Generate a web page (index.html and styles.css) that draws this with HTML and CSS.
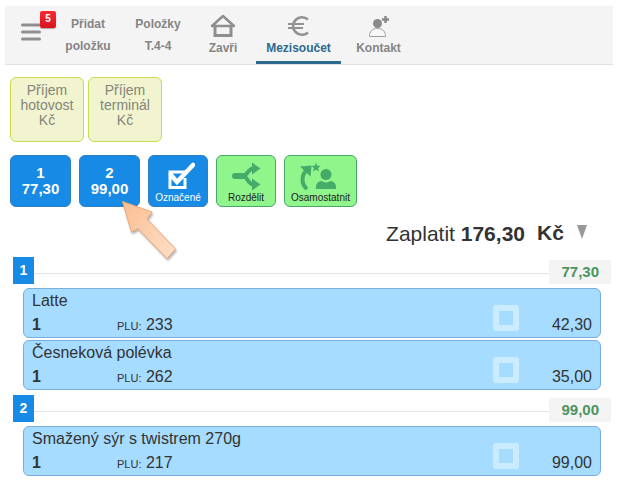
FILE: index.html
```
<!DOCTYPE html>
<html lang="cs">
<head>
    <meta charset="UTF-8">
    <meta name="viewport" content="width=device-width, initial-scale=1.0">
    <title>Mezisoučet</title>
    <link rel="stylesheet" href="styles.css">
</head>
<body>
    <nav class="topbar">
        <button class="menu" type="button" aria-label="Menu">
            <svg width="20" height="18" viewBox="0 0 20 18" fill="none" stroke="#8f8f8f" stroke-width="3" stroke-linecap="round">
                <path d="M1.500 2h17M1.500 9h17M1.500 16h17"/>
            </svg>
            <span class="menu-badge">5</span>
        </button>
        <a class="tab tab-text" href="#">Přidat<br>položku</a>
        <a class="tab tab-text" href="#">Položky<br>T.4-4</a>
        <a class="tab tab-close" href="#">
            <svg width="26" height="24" viewBox="0 0 26 24" fill="none" stroke="#8f8f8f">
                <path d="M2 12L13 2l11 10z" stroke-width="2.500" stroke-linejoin="round"/>
                <path d="M5 12v9.500h16V12" stroke-width="3"/>
            </svg>
            Zavři
        </a>
        <a class="tab tab-active" href="#">
            <svg width="26" height="24" viewBox="0 0 26 24" fill="none" stroke="#929292">
                <path d="M22 5.500A9 8.700 0 1 0 22 18.500" stroke-width="2.600"/>
                <path d="M2 10h16M2 14h15" stroke-width="1.800"/>
            </svg>
            Mezisoučet
        </a>
        <a class="tab tab-contact" href="#">
            <svg width="26" height="24" viewBox="0 0 26 24" fill="none">
                <path d="M3.500 22.500c0-5 2.500-8 8-8s8 3 8 8z" stroke="#a0a0a0" fill="#f8f8f8"/>
                <circle cx="11.500" cy="9.500" r="4.500" fill="#8a8a8a"/>
                <path d="M19.500 2v7M16 5.500h7" stroke="#8a8a8a" stroke-width="2.500"/>
            </svg>
            Kontakt
        </a>
    </nav>

    <main class="content">
        <!-- Payments -->
        <div class="payments">
            <button class="payment" type="button">Příjem<br>hotovost<br>Kč</button>
            <button class="payment" type="button">Příjem<br>terminál<br>Kč</button>
        </div>

        <!-- Bill actions -->
        <div class="actions">
            <button class="action action-bill" type="button">1<br>77,30</button>
            <div class="pointed">
                <button class="action action-bill" type="button">2<br>99,00</button>
                <svg class="pointer" width="60" height="66" viewBox="0 0 60 66">
                    <defs>
                        <linearGradient id="peach" x1="0" y1="0" x2="1" y2="1">
                            <stop offset="0" stop-color="#fbbd91"/>
                            <stop offset="1" stop-color="#fde0c8"/>
                        </linearGradient>
                    </defs>
                    <path d="M1.500 1.500L31 12l-5 7 28.500 30L46 58.500 17 28.500l-6.500 3.500z" fill="url(#peach)" stroke="#f2a873" stroke-linejoin="round"/>
                </svg>
            </div>
            <button class="action" type="button">
                <svg width="34" height="30" viewBox="0 0 34 30" fill="none" stroke="#fff">
                    <path d="M24 10H9v15.500h15V16" stroke-width="3"/>
                    <path d="M10 13l6 7L32 3" stroke-width="4.500" stroke-linecap="round"/>
                </svg>
                Označené
            </button>
            <button class="action action-green" type="button">
                <svg width="34" height="30" viewBox="0 0 34 30" fill="none" stroke="#44ab69" stroke-width="4">
                    <path d="M5 14h9c5 0 4-7.500 11-7.500"/>
                    <path d="M14 14c5 0 4 8.500 11 8.500"/>
                    <path d="M6 14h9" stroke-width="6" stroke-linecap="round"/>
                    <path d="M23 .5l8.500 6-8.500 6zM23 16.500l8.500 6-8.500 6z" fill="#44ab69" stroke="none"/>
                </svg>
                Rozdělit
            </button>
            <button class="action action-green action-wide" type="button">
                <svg width="42" height="30" viewBox="5 0 42 30" fill="#44ab69">
                    <path d="M12 27C6 22 6 13 12 8" fill="none" stroke="#44ab69" stroke-width="4"/>
                    <path d="M5 4.500l11.500-1-1 11z"/>
                    <path d="M21 .5l1.200 3.300h3.600l-2.800 2.200 1 3.500-3-2-3 2 1-3.500-2.800-2.200h3.600z"/>
                    <circle cx="31" cy="12.500" r="5.500"/>
                    <path d="M21 27v-2c0-4 3-6 6-6 2.500 2 5.500 2 8 0 3 0 6 2 6 6v2z"/>
                </svg>
                Osamostatnit
            </button>
        </div>

        <!-- Total -->
        <div class="total">
            <span>Zaplatit <strong>176,30</strong></span>
            <span class="currency">
                <select class="currency-select" aria-label="Měna">
                    <option>Kč</option>
                </select>
                <span class="currency-arrow"></span>
            </span>
        </div>

        <!-- Bill 1 -->
        <section class="bill">
            <header class="bill-head">
                <span class="bill-number">1</span>
                <span class="bill-line"></span>
                <span class="bill-sum">77,30</span>
            </header>
            <div class="item">
                <label class="item-name" for="item233">Latte</label>
                <b class="item-count">1</b>
                <span class="item-plu"><small>PLU:</small> 233</span>
                <input class="item-check" type="checkbox" id="item233">
                <span class="item-price">42,30</span>
            </div>
            <div class="item">
                <label class="item-name" for="item262">Česneková polévka</label>
                <b class="item-count">1</b>
                <span class="item-plu"><small>PLU:</small> 262</span>
                <input class="item-check" type="checkbox" id="item262">
                <span class="item-price">35,00</span>
            </div>
        </section>

        <!-- Bill 2 -->
        <section class="bill">
            <header class="bill-head">
                <span class="bill-number">2</span>
                <span class="bill-line"></span>
                <span class="bill-sum">99,00</span>
            </header>
            <div class="item">
                <label class="item-name" for="item217">Smažený sýr s twistrem 270g</label>
                <b class="item-count">1</b>
                <span class="item-plu"><small>PLU:</small> 217</span>
                <input class="item-check" type="checkbox" id="item217">
                <span class="item-price">99,00</span>
            </div>
        </section>
    </main>
</body>
</html>
```
FILE: styles.css
```
* {
    box-sizing: border-box;
}

body {
    font-family: "Liberation Sans", Arial, sans-serif;
    margin: 0;
    padding: 6px 6px 16px 5px;
    background: #fff;
    color: #333;
}

button {
    font-family: inherit;
    padding: 0;
    cursor: pointer;
}

/* Top bar */
.topbar {
    display: flex;
    height: 59px;
    background: #f4f4f4;
    border-bottom: 1px solid #e2e2e2;
}

.menu {
    position: relative;
    width: 48px;
    padding: 0 0 6px 4px;
    border: none;
    background: none;
}

.menu svg {
    display: block;
    margin: 0 auto;
}

.menu-badge {
    position: absolute;
    top: 5px;
    right: -3px;
    width: 16px;
    height: 17px;
    border-radius: 2px;
    background: linear-gradient(#fb2a35, #d9141f);
    box-shadow: 0 1px 1px rgba(0, 0, 0, 0.3);
    color: #fff;
    font-size: 10px;
    font-weight: bold;
    line-height: 16px;
}

.tab {
    display: flex;
    flex-direction: column;
    align-items: center;
    width: 70px;
    padding-top: 8px;
    color: #858585;
    font-size: 12px;
    font-weight: bold;
    line-height: 20px;
    text-align: center;
    text-decoration: none;
}

.tab-text {
    display: block;
    padding-top: 7px;
    line-height: 22px;
}

.tab-close {
    width: 63px;
    padding-right: 3px;
}

.tab-active {
    width: 85px;
    border-bottom: 3px solid #2d6a8e;
    color: #2d6a8e;
}

.tab-contact {
    width: 75px;
}

.content {
    padding: 12px 0 0 5px;
}

/* Payments */
.payments {
    display: flex;
    gap: 4px;
    margin-bottom: 13px;
}

.payment {
    width: 74px;
    height: 65px;
    padding-bottom: 9px;
    border: 1px solid #c9da4a;
    border-radius: 6px;
    background: #f1f4ce;
    color: #85857a;
    font-size: 14px;
    line-height: 15px;
}

/* Actions */
.actions {
    display: flex;
    gap: 8px;
}

.action {
    display: flex;
    flex-direction: column;
    align-items: center;
    width: 60px;
    height: 52px;
    padding-top: 6px;
    border: 1px solid #2f7fc4;
    border-radius: 6px;
    background: #168ae4;
    color: #fff;
    font-size: 10px;
    line-height: 12px;
}

.action-bill {
    display: block;
    width: 61px;
    padding: 0;
    font-size: 15px;
    font-weight: bold;
    line-height: 16px;
}

.action-green {
    border-color: #4aa56a;
    background: #90f58b;
    color: #222;
}

.action-wide {
    width: 73px;
}

.pointed {
    position: relative;
}

.pointer {
    position: absolute;
    left: 42px;
    top: 45px;
    filter: drop-shadow(1px 2px 1px rgba(0, 0, 0, 0.3));
    pointer-events: none;
}

/* Total */
.total {
    display: flex;
    justify-content: flex-end;
    align-items: center;
    gap: 12px;
    height: 50px;
    padding: 4px 26px 0 0;
    font-size: 21px;
}

.currency {
    position: relative;
    padding-bottom: 4px;
}

.currency-select {
    display: block;
    width: 50px;
    padding: 0;
    border: none;
    appearance: none;
    background: none;
    color: #333;
    font: bold 21px "Liberation Sans", Arial, sans-serif;
}

.currency-arrow {
    position: absolute;
    right: 0;
    top: 4px;
    border: solid transparent;
    border-width: 14px 5px 0;
    border-top-color: #999;
    pointer-events: none;
}

/* Bills */
.bill {
    display: flex;
    flex-direction: column;
    gap: 2px;
    margin-bottom: 5px;
}

.bill-head {
    display: flex;
    align-items: flex-end;
    margin: 0 2px 2px 3px;
    font-size: 15px;
    font-weight: bold;
}

.bill-number {
    width: 21px;
    background: #168ae4;
    color: #fff;
    font-size: 14px;
    line-height: 27px;
    text-align: center;
}

.bill-line {
    flex: 1;
    height: 11px;
    border-top: 1px solid #e4e4e4;
}

.bill-sum {
    padding: 0 12px;
    background: #f4f4f4;
    color: #4a9560;
    line-height: 24px;
}

.item {
    display: grid;
    grid-template-columns: 85px 1fr 26px 73px;
    margin: 0 12px 0 13px;
    padding: 0 8px;
    border: 1px solid #7aaede;
    border-radius: 6px;
    background: #a5dcff;
    font-size: 16px;
    line-height: 24px;
}

.item-name {
    grid-column: 1 / 3;
}

.item-count,
.item-plu,
.item-price {
    grid-row: 2;
}

.item-plu small {
    font-size: 11px;
    line-height: 1;
}

.item-check {
    grid-column: 3;
    grid-row: 1 / 3;
    align-self: end;
    width: 26px;
    height: 26px;
    margin: 0 0 6px;
    border: 6px solid #cbebff;
    border-radius: 3px;
    appearance: none;
}

.item-check:checked {
    background: #168ae4;
}

.item-price {
    grid-column: 4;
    text-align: right;
}
```
